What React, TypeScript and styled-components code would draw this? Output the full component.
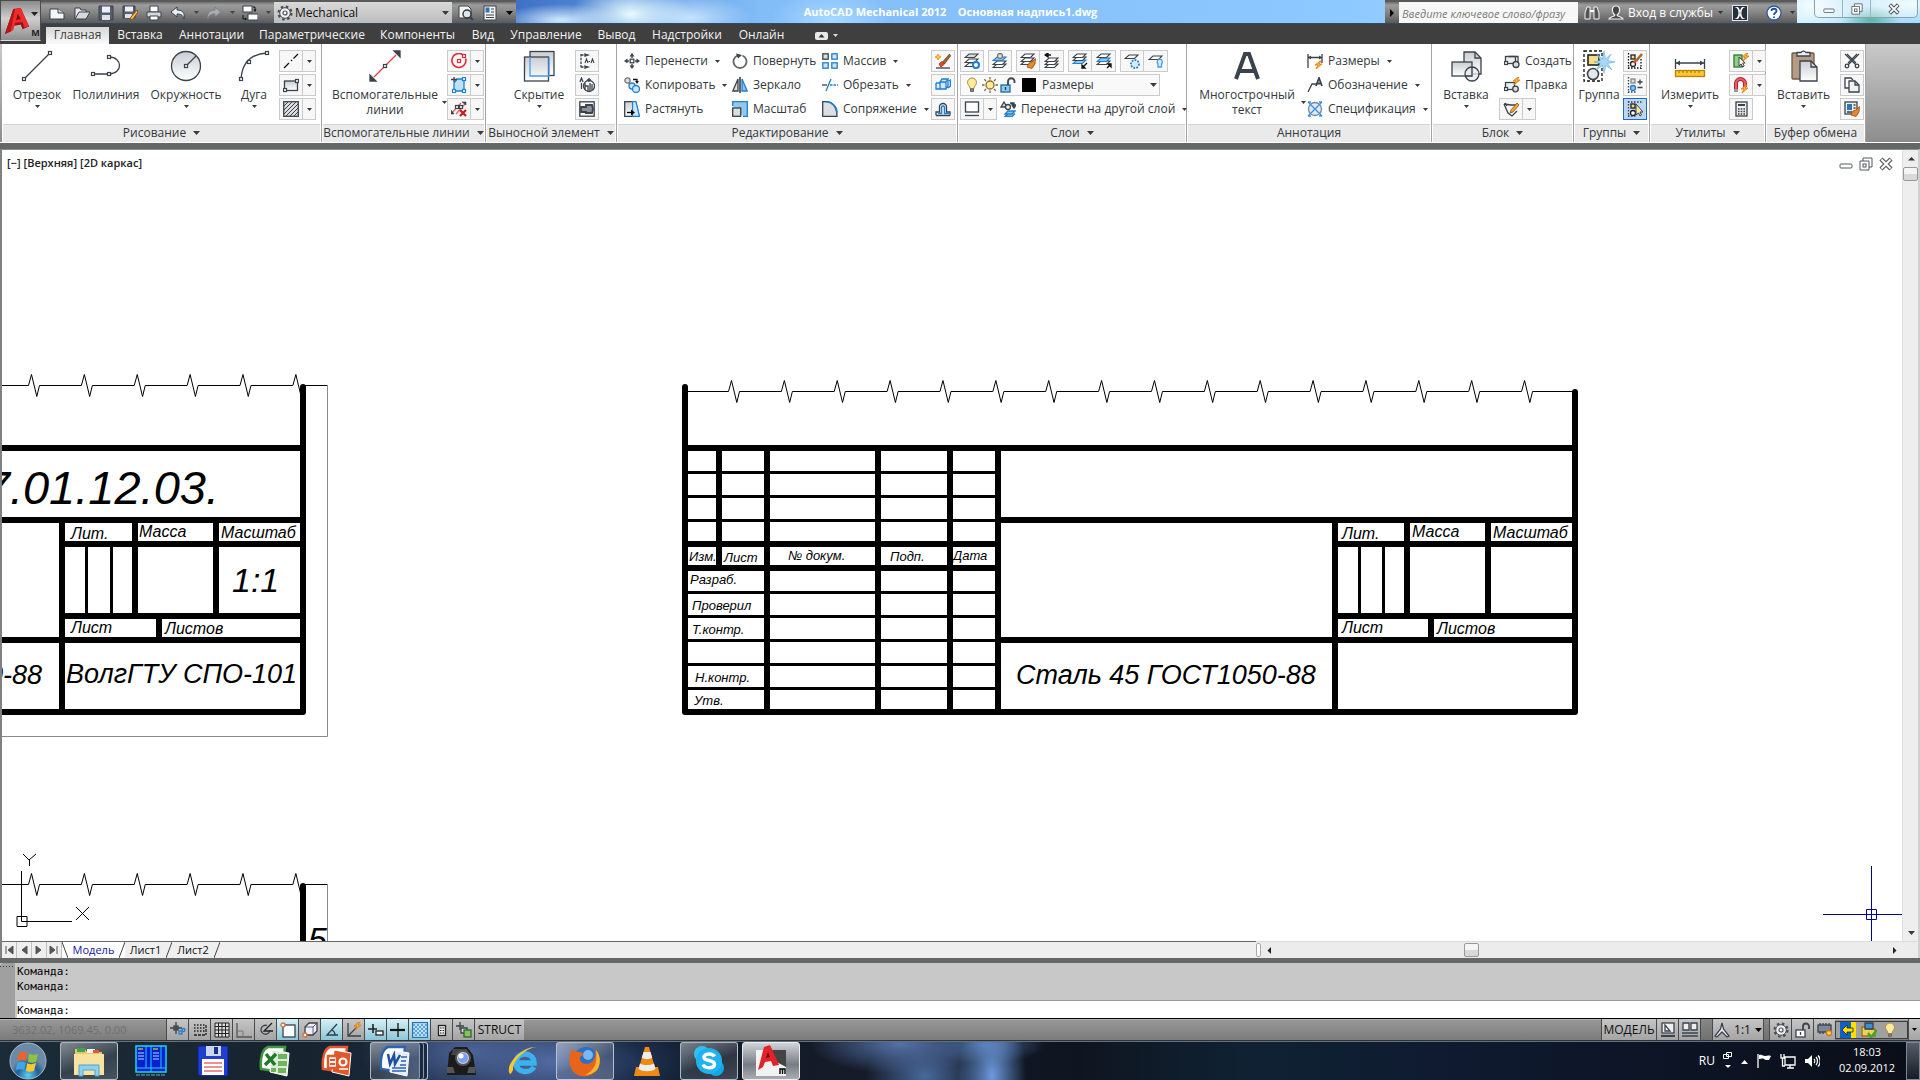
import React from "react";
import styled, { createGlobalStyle, css } from "styled-components";

const UI = `"Open Sans", "Noto Sans", sans-serif`;
const INK = "#3a424b";
const BLUE = "#1f7fd0";

const Global = createGlobalStyle`
  *, *::before, *::after { box-sizing: border-box; }
  html, body, #root { height: 100%; }
  body { margin: 0; overflow: hidden; background: #636363; font: 12px/16px ${UI}; color: #33383d; }
  button, input, select { font: inherit; color: inherit; margin: 0; padding: 0; border: 0; background: none; border-radius: 0; }
  svg { display: block; flex: none; }
`;

/* ---------- icons ---------- */

type IcoProps = { s?: number; vb?: string; w?: number; children: React.ReactNode };
const Ico = ({ s = 16, w = 1.3, vb, children }: IcoProps) => (
  <svg width={s} height={s} viewBox={vb || `0 0 ${s} ${s}`} fill="none" stroke={INK} strokeWidth={w} aria-hidden="true">
    {children}
  </svg>
);
const Node = ({ x, y, c = INK }: { x: number; y: number; c?: string }) => (
  <rect x={x - 1.5} y={y - 1.5} width="3" height="3" fill="#fff" stroke={c} strokeWidth="1.2" />
);
const Bolt = ({ x, y }: { x: number; y: number }) => (
  <path transform={`translate(${x} ${y})`} d="M5 0 0 4h3L1 8l6-5H4L6 0z" fill="#ffb52e" stroke="#d9760a" strokeWidth=".8" />
);
const Sheet = ({ y, f = "#fff", c = INK }: { y: number; f?: string; c?: string }) => (
  <path d={`M5 ${y}h9l-3.500 3.500H1z`} fill={f} stroke={c} strokeWidth="1.100" />
);
const Grey = () => (
  <defs>
    <linearGradient id="gm" x1="0" y1="0" x2="0" y2="1">
      <stop offset="0" stopColor="#c9cdd3" /><stop offset="1" stopColor="#fff" />
    </linearGradient>
  </defs>
);
const Arrow = ({ size = 5, color = "#3b3b3b" }: { size?: number; color?: string }) => (
  <svg width={size} height={Math.ceil(size / 2)} viewBox="0 0 6 3" preserveAspectRatio="none" aria-hidden="true">
    <path d="M0 0h6L3 3z" fill={color} />
  </svg>
);
const Bulb = ({ s = 16 }: { s?: number }) => (
  <Ico s={s} vb="0 0 16 16" w={1}>
    <path d="M8 1a4.500 4.500 0 0 0-4.500 4.500C3.500 8 6 9 6 11.500h4C10 9 12.500 8 12.500 5.500A4.500 4.500 0 0 0 8 1z" fill="#ffeb9c" stroke="#a98b45" />
    <path d="M6.500 12h3v2.500h-3z" fill="#888" stroke="#666" />
  </Ico>
);
const Gear = ({ s = 16, c = "#4a5058" }: { s?: number; c?: string }) => (
  <Ico s={s} vb="0 0 16 16" w={1.2}>
    <circle cx="8" cy="8" r="6.300" stroke={c} strokeWidth="2.600" strokeDasharray="2.500 2.450" />
    <circle cx="8" cy="8" r="5.300" fill="#eee" stroke={c} strokeWidth="1" />
    <circle cx="8" cy="8" r="2" fill="#fff" stroke={c} />
  </Ico>
);
const BrushShape = () => (
  <path d="M15.500 5.500 12 9l-3 1-2 4 5 1.500L15 11z" fill="#e8882a" stroke="#9c4b10" strokeWidth=".8" />
);

const I = {
  line: <Ico s={32}><path d="M3 29 29 3" /><Node x={3} y={29} /><Node x={29} y={3} /></Ico>,
  pline: <Ico s={32}><path d="M3 24h16c14 0 14-17 0-17" /><Node x={3} y={24} /><Node x={19} y={24} /><Node x={19} y={7} /></Ico>,
  circle: <Ico s={32}><Grey /><circle cx="16" cy="16" r="14.500" fill="url(#gm)" /><path d="M16 16 26 6" /><Node x={16} y={16} /></Ico>,
  arc: <Ico s={32}><path d="M3 29C4 14 12 4 29 3" /><Node x={3} y={29} /><Node x={11} y={12} /><Node x={29} y={3} /></Ico>,
  dash: <Ico><path d="M1 15 6 10M8 8l1-1M10.500 5.500 15 1" stroke="#111" /></Ico>,
  rect: <Ico><Grey /><rect x="1.500" y="4" width="13" height="9.500" fill="url(#gm)" /><Node x={2} y={13} /><Node x={14} y={4} /></Ico>,
  hatch: <Ico><rect x=".7" y=".7" width="14.600" height="14.600" fill="#ddd" /><path d="M1 5 5 1M1 9l8-8M1 13 13 1M3 15 15 3M7 15l8-8M11 15l4-4" strokeWidth="1" /></Ico>,
  xline: <Ico s={32}><path d="M5 27 27 5" stroke="#e04040" /><path d="M1 31v-6l6 6zM31 1v6l-6-6z" fill={INK} /><Node x={16} y={16} /></Ico>,
  cline: <Ico><path d="M11.500 1.500A7 7 0 1 0 14.600 5.500" stroke="#e02f3a" strokeWidth="1.600" /><Node x={8} y={8} c="#e02f3a" /><Node x={13} y={3} c="#e02f3a" /></Ico>,
  cshape: <Ico><path d="M3 14V6l3-4h7v12z" fill="#bfe0f7" stroke={BLUE} /><path d="M3 0v5M0 2.500h6" /><Node x={3} y={14} c={BLUE} /><Node x={13} y={14} c={BLUE} /><Node x={13} y={2} c={BLUE} /></Ico>,
  cdel: <Ico><path d="M1 12 10 2M5 13l9-10" stroke="#d66" /><path d="M0 13v-4l3 4zM11 1h4v3z" fill={INK} strokeWidth=".6" /><Node x={6} y={6} /><Node x={10} y={6} /><path d="m9 9 6 6m0-6-6 6" stroke="#d01818" strokeWidth="2.200" /></Ico>,
  hide: <Ico s={32}><Grey /><rect x="7" y="1.500" width="24" height="24" fill="url(#gm)" /><rect x="1.500" y="7" width="24" height="24" fill="url(#gm)" /><path d="M7 7v19h19V7" stroke="#4a9be8" /></Ico>,
  detailA: <Ico><path d="M2 1v14M2 2h5M2 14h5" strokeDasharray="2.500 1.200" /><path d="m6 1 3 1-3 1zM6 13l3 1-3 1z" fill={INK} /><path d="m6 10 1.500-4L9 10M9.500 8.500h1.500M12 10l1.500-4 1.500 4" strokeWidth="1.100" /></Ico>,
  detailB: <Ico><circle cx="10" cy="9" r="5.500" /><path d="M6 13V6m0 3h3v5m2 0V6m2 1v6" /><path d="m1 5 1.500-4L4 5M2.500 6v6M8 3l4 0M10 1v4" /></Ico>,
  detailC: <Ico><rect x=".8" y=".8" width="14.400" height="14.400" /><path d="M2 6h5V4h6l1 4-1 4H7v-1H2z" fill="#8b9198" strokeWidth="1.800" /></Ico>,
  move: <Ico><path d="M8 0 5.500 3.500h5zM8 16l-2.500-3.500h5zM0 8l3.500-2.500v5zM16 8l-3.500-2.500v5z" fill={INK} stroke="none" /><path d="M8 3v2M8 11v2M3 8h2M11 8h2" /><rect x="6.200" y="6.200" width="3.600" height="3.600" fill="#fff" /></Ico>,
  copy: <Ico><circle cx="3.500" cy="3.500" r="2.700" fill="#ddd" stroke="#777" /><circle cx="8" cy="9" r="3" fill="#cfe6fa" stroke={BLUE} /><circle cx="12" cy="12" r="3.500" fill="#cfe6fa" stroke={BLUE} /><path d="M9 2.500h4v2" stroke="#111" /><path d="M11 4h4l-2 3z" fill="#111" stroke="none" /></Ico>,
  stretch: <Ico><Grey /><path d="M8.500.7H12L15.500 15.300H8.500z" fill="#cfe6fa" stroke={BLUE} /><path d="M8 .7H.7v14.600H8" fill="url(#gm)" /><path d="M3 11.500h5" stroke="#000" /><path d="m7 8.500 4 3-4 3z" fill="#000" stroke="none" /></Ico>,
  rotate: <Ico><path d="M5.500 2.500A6.500 6.500 0 1 0 10.500 2.500" stroke="#666" strokeWidth="1.800" /><path d="M4 .5 10 2 6 5.500z" fill={INK} stroke="none" /></Ico>,
  mirror: <Ico><path d="M6 2v12H.8z" fill="#ddd" /><path d="M10 2v12h5.200z" fill="#8fc3ee" stroke={BLUE} /><path d="M8 0v16" stroke="#111" /></Ico>,
  scale: <Ico><path d="M.7 5V.7h14.600v14.600H11" fill="#8fc9ec" stroke={BLUE} /><rect x=".7" y="7" width="8" height="8.300" fill="#ddd" /></Ico>,
  array: <Ico><rect x=".8" y=".8" width="5.400" height="5.400" fill="#ddd" /><rect x="9.800" y=".8" width="5.400" height="5.400" fill="#cfe6fa" stroke={BLUE} /><rect x=".8" y="9.800" width="5.400" height="5.400" fill="#cfe6fa" stroke={BLUE} /><rect x="9.800" y="9.800" width="5.400" height="5.400" fill="#cfe6fa" stroke={BLUE} /></Ico>,
  trim: <Ico><path d="M0 8h5" /><path d="M4 14 9 2" stroke={BLUE} /><path d="M8 8h8" stroke={BLUE} strokeDasharray="2.500 1" /></Ico>,
  fillet: <Ico><path d="M.7 15.300V.7H4c6 0 11 5 11 14.600z" fill="#dcdfe3" /><path d="M4 .7c6 0 11 5 11 11" stroke={BLUE} strokeWidth="1.600" /></Ico>,
  match: <Ico><path d="M1 15h14" /><path d="m14.500 1-7 8 2 2 6-8z" fill="#a06a34" stroke="#6b4218" strokeWidth=".8" /><path d="M4 11 7 8.500 9.500 11 6 14z" fill="#e34a22" stroke="#9a2c0c" strokeWidth=".8" /><path d="m3 1 1 2 2 1-2 1-1 2-1-2-2-1 2-1z" fill="#ffc14d" stroke="#e28a0c" strokeWidth=".7" /></Ico>,
  block3d: <Ico><path d="M5 5h6v7H5zM5 5l2-3h6l-2 3M11 12l2-3V2M1 6h4M1 6v6h4M14 4l1.500-1v6L13 11" fill="#cfe6fa" stroke={BLUE} /></Ico>,
  offset: <Ico><path d="M1 14.500h14M1 14.500V11h3.500V6a3.500 3.500 0 0 1 7 0v5H15v3.500" /><path d="M3 12.500h3.500V6.500a1.500 1.500 0 0 1 3 0v6H14" stroke={BLUE} strokeWidth="1.500" /></Ico>,
  lay1: <Ico><Sheet y={10} /><Sheet y={6} /><Sheet y={1} f="#ddd" /><circle cx="12" cy="12" r="3" stroke={BLUE} strokeWidth="2" fill="#fff" /></Ico>,
  lay2: <Ico><Sheet y={11} /><Sheet y={8} /><Sheet y={4} f="#8fc9ec" c={BLUE} /><circle cx="8" cy="3" r="2.500" fill="#ddd" stroke="#777" /></Ico>,
  lay3: <Ico><Sheet y={8} /><Sheet y={5} /><Sheet y={1} /><BrushShape /></Ico>,
  lay4: <Ico><Sheet y={11} /><Sheet y={8} /><Sheet y={5} /><path d="M7 2H2M1 2l3-2v4z" fill="#111" stroke="#111" /></Ico>,
  lay5: <Ico><Sheet y={7} f="#8fc9ec" c={BLUE} /><Sheet y={4} /><Sheet y={1} /><path d="m15 10-4 4M10 15v-3l3 3z" fill="#111" stroke="#111" /></Ico>,
  lay6: <Ico><Sheet y={8} /><Sheet y={5} f="#8fc9ec" c={BLUE} /><Sheet y={1} /><path d="m11 15 3-3M15 11v3l-3-3z" fill="#111" stroke="#111" /></Ico>,
  lay7: <Ico><Sheet y={2} /><circle cx="11" cy="11" r="4" fill="#d9ecfb" stroke={BLUE} strokeDasharray="1.800 1.200" strokeWidth="1.800" /></Ico>,
  lay8: <Ico><Sheet y={3} /><path d="M12 6a3 3 0 0 0-2 5v3h3.500v-3A3 3 0 0 0 12 6z" fill="#d9ecfb" stroke="#4f9ede" /></Ico>,
  sun: <Ico><circle cx="8" cy="8" r="4" fill="#ffeb9c" stroke="#8b6f2c" /><path d="M8 0v2.500M8 13.500V16M0 8h2.500M13.500 8H16M2.300 2.300l1.800 1.800M12 12l1.700 1.700M13.700 2.300 12 4.100M4 12l-1.700 1.700" stroke="#7a6a45" /></Ico>,
  lock: <Ico><rect x="1" y="8" width="9" height="7" fill="#8fc9ec" stroke="#1a6a9a" /><path d="M8 8V4.500a3.200 3.200 0 0 1 6.500 0V6" strokeWidth="1.800" /><path d="M5.500 10v3" stroke="#103a55" /></Ico>,
  laystate: <Ico><rect x="1.500" y="1" width="13" height="10" fill="#fff" /><path d="M1 14.500h14" /></Ico>,
  layMove: <Ico><path d="m1 6 3-5 3 5z" fill="#ddd" /><circle cx="8" cy="6" r="2.500" fill="#eee" /><path d="M10 2h4v3M12 4h4l-2 3z" fill={INK} /><path d="M8 10h7l-3 3H5zM8 13l-3 2.500h7l3-3" fill="#8fc9ec" stroke={BLUE} /></Ico>,
  dim: <Ico><path d="M1 1v14M15 1v9M1 4.500h14" /><path d="m1 4.500 3-2v4zM15 4.500l-3-2v4z" fill={INK} stroke="none" /><Bolt x={8} y={8} /></Ico>,
  leader: <Ico><path d="M1 15 5 7h4" /><path d="m9 9 3-8 3 8M10 6.500h4" strokeWidth="1.800" /></Ico>,
  bom: <Ico><circle cx="8" cy="8" r="6.500" fill="#dbe9f8" stroke="#7a8896" /><path d="m1 1 14 14M15 1 1 15M1 1h3M12 1h3M1 15h3M12 15h3" stroke="#3f8fe0" /></Ico>,
  insert: <Ico s={32}><Grey /><path d="M14 2h11l6 6v16H14z" fill="url(#gm)" /><path d="M25 2v6h6" /><rect x="2" y="12" width="20" height="14" fill="url(#gm)" /><circle cx="22" cy="24" r="7" fill="#e8eaed" fillOpacity=".8" /><path d="M22 17v9h-7" /></Ico>,
  create: <Ico><rect x="1.500" y="3.500" width="10" height="7" fill="#eee" /><path d="M4 3.500h10v7" /><circle cx="12" cy="11.500" r="3" fill="#ddd" /><Node x={2} y={10} /></Ico>,
  edit: <Ico><rect x="1.500" y="5.500" width="9" height="7" fill="#eee" /><circle cx="11.500" cy="12" r="2.800" fill="#ddd" /><Node x={2} y={12} /><Bolt x={9} y={0} /></Ico>,
  attr: <Ico><path d="m1 3 7 1 7 0M1 3l4 9 4 3 5-5" /><path d="m2 2 2 3" /><path d="m14 2-6 7-1 3 3-1 6-7z" fill="#f3a536" stroke="#8a4f10" strokeWidth=".8" /></Ico>,
  group: <Ico s={32}><rect x="1" y="1" width="18" height="30" stroke="#111" strokeDasharray="3 2" /><rect x="5" y="5" width="11" height="10" fill="#f7dd88" stroke="#222" strokeWidth="1.600" /><circle cx="10" cy="24" r="5.500" fill="#dfe9ef" stroke="#444" strokeWidth="1.600" /><path d="M21 1l1.500 8L28 4l-3.500 6.500L32 12l-7.500 1.500L29 20l-6-4.500L21 23l-1.500-7.500L13 20l4.500-6.500L11 12l6.500-1.500L14 4l5.500 5z" fill="#a9d8f7" stroke="#5aa9e2" strokeWidth=".6" /></Ico>,
  gEdit: <Ico><path d="M1.500 0v16M14 6v10M1 15h13" strokeDasharray="1.500 1.500" stroke="#111" /><rect x="4" y="2" width="4" height="4" fill="#f7dd88" stroke="#222" /><circle cx="6" cy="11" r="2.500" stroke="#222" /><path d="m15 1-6 7" stroke="#a06a34" strokeWidth="2.600" /><path d="M9 7 7 10" stroke="#e34a22" strokeWidth="2.600" /></Ico>,
  gPlus: <Ico><path d="M1.500 0v16M1 15h9" strokeDasharray="1.500 1.500" /><rect x="4" y="2" width="4" height="4" fill="#ddd" stroke="#888" /><circle cx="6" cy="11" r="2.500" fill="#8fc9ec" stroke={BLUE} /><path d="M10.500 5h5M13 2.500v5M10.500 10.500h5" /></Ico>,
  gSel: <Ico><path d="M1.500 0v16M1 1h14M1 15h9" strokeDasharray="1.500 1.500" /><rect x="4" y="3" width="4" height="4" fill="#f7dd88" stroke="#222" /><circle cx="6" cy="12" r="2.500" stroke="#222" fill="#fff" /><path d="M9 3v11l2.500-2 1.500 3 1.500-1-1.500-3H16z" fill="#ffe9a8" strokeWidth="1" /></Ico>,
  measure: <Ico s={32}><path d="M1.500 9v10M30.500 9v10M2 13h28" /><path d="m2 13 4-2.500v5zM30 13l-4-2.500v5z" fill={INK} stroke="none" /><rect x="1.500" y="20.500" width="29" height="6" fill="#fcc832" stroke="#b98106" /><path d="M5 21v2M9 21v2M13 21v2M17 21v2M21 21v2M25 21v2" stroke="#b98106" /></Ico>,
  qsel: <Ico><rect x="1" y="2" width="8" height="12" fill="#8fd08a" stroke="#2d7c2c" /><path d="M6 4v9l2.200-2 1.500 3 1.500-1-1.500-3h2.500z" fill="#fff" strokeWidth="1" /><Bolt x={9} y={0} /></Ico>,
  magnet: <Ico><path d="M3 14V6.500a4.500 4.500 0 0 1 9 0V10" stroke="#b02030" strokeWidth="4" /><path d="M3 13V6.500a4.500 4.500 0 0 1 9 0V9" stroke="#ea5a62" strokeWidth="2" /><path d="M1 13.500h4" stroke="#999" strokeWidth="3" /><Bolt x={8} y={8} /></Ico>,
  calc: <Ico><rect x="3" y="1" width="11" height="14" fill="#eee" /><path d="M5 4h7" strokeWidth="2" /><path d="M5 8h7M5 10.500h7M5 13h7" strokeDasharray="1.600 1.100" strokeWidth="1.500" /></Ico>,
  paste: <Ico s={32}><Grey /><rect x="4" y="3" width="22" height="26" rx="1" fill="#b49c84" stroke="#6e5b48" /><path d="M9 5V2.500h4a3 3 0 0 1 5 0h4V6H9z" fill="#eee" /><path d="M12 11h11l6 6v14H12z" fill="url(#gm)" /><path d="M23 11v6h6" /></Ico>,
  cut: <Ico><path d="m1 1 11 11M15 1 4 12M3 1l9 9M13 1 4 10" strokeWidth="1.100" /><circle cx="3" cy="13" r="1.800" /><circle cx="13" cy="13" r="1.800" /></Ico>,
  copyClip: <Ico><path d="M5 11H1V1h6l2 2" fill="#fff" /><path d="M5 4h6l4 4v7H5z" fill="#f2f2f2" /><path d="M11 4v4h4" /></Ico>,
  pasteProp: <Ico><rect x="1" y="1" width="12" height="12" fill="#eee" /><rect x="3" y="3" width="5" height="6" fill="#2f75b5" stroke="none" /><path d="M9.500 4h2M9.500 7h2M3 11h5" /><BrushShape /></Ico>,
};

/* quick access toolbar icons, light on grey */
const Q = {
  file: <Ico w={1}><path d="M1 4h8l6 4v6H1z" fill="#f4f6f9" /><path d="M9 4v4h6" fill="#cfd4da" /></Ico>,
  open: <Ico w={1}><path d="M1 14V3h5l1 2h5v3" fill="#e6e8ea" /><path d="m1 14 4-7h11l-4 7z" fill="#d5d9de" /></Ico>,
  save: <Ico w={1}><path d="M1 1h14v14H1z" fill="#555f6b" /><rect x="4" y="1.500" width="8" height="6" fill="#eef" stroke="none" /><rect x="4" y="10" width="8" height="5" fill="#dfe3e8" stroke="none" /></Ico>,
  saveAs: <Ico w={1}><path d="M1 1h12v12H1z" fill="#555f6b" /><rect x="3" y="1.500" width="8" height="5" fill="#eef" stroke="none" /><rect x="3" y="9" width="7" height="4" fill="#dfe3e8" stroke="none" /><path d="m15 5-6 7-1 3 3-1 5-7z" fill="#ffc04a" stroke="#8a4f10" /></Ico>,
  print: <Ico w={1}><path d="M4 1h8v6H4z" fill="#fff" /><path d="M1 7h14v5H1z" fill="#d5d9de" /><path d="M4 11h8v4H4z" fill="#fff" /></Ico>,
  undo: <Ico w={1}><path d="M1 7 7 2v3c6 0 8 3 7 9-1-4-3-5-7-5v3z" fill="#e8eef4" /></Ico>,
  redo: <Ico w={1}><path d="M15 7 9 2v3C3 5 1 8 2 14c1-4 3-5 7-5v3z" fill="#a9adb1" stroke="#7b7f84" /></Ico>,
  wswitch: <Ico w={1}><rect x="1" y="1" width="9" height="6" fill="#fff" /><rect x="6" y="9" width="10" height="6" fill="#fff" /><path d="M1 10v4h3M13 6V2h-2" stroke="#111" /><path d="M3 12.500v3l2-1.500zM11.500 4.500h3L13 7z" fill="#111" stroke="none" /></Ico>,
  preview: <Ico w={1}><path d="M1 1h9l3 3v9H1z" fill="#f2f2f2" /><circle cx="9" cy="9" r="4" fill="#dbe7f0" stroke="#333" strokeWidth="1.400" /><path d="m12 12 3 3" strokeWidth="2" /></Ico>,
  props: <Ico w={1}><rect x="2" y="1" width="12" height="14" fill="#f2f2f2" /><rect x="3.500" y="2.500" width="4" height="5" fill="#2f75b5" stroke="none" /><path d="M9 4h3M9 7h3M4 10h8M4 12.500h8" /></Ico>,
  binoc: <Ico w={1}><path d="M1 14V8l2-6h3v12zM15 14V8l-2-6h-3v12z" fill="#555" stroke="#f0f0f0" /><path d="M6 6h4" stroke="#fff" strokeWidth="2" /></Ico>,
  user: <Ico w={1}><path d="M8 1C5 1 4 3 4.500 6S7 10 7 10c0 2-5 1-6 4h14c-1-3-6-2-6-4 0 0 2-1 2.500-4S11 1 8 1z" fill="#444" stroke="#f4f4f4" strokeWidth="1.200" /></Ico>,
  exch: <Ico w={1}><rect x=".5" y=".5" width="15" height="15" fill="#26303a" stroke="#dfe6ec" /><path d="M2 2c6 0 6 12 0 12l4 0c3-3 3-9 0-12zM14 2c-6 0-6 12 0 12l-4 0c-3-3-3-9 0-12z" fill="#fff" stroke="none" /></Ico>,
};

/* status bar icons */
const S = [
  <Ico><path d="M6 0v12M0 6h12" /><rect x="4" y="4" width="4" height="4" /><rect x="9" y="9" width="3" height="3" stroke={BLUE} /><circle cx="13.500" cy="8" r="1.500" stroke={BLUE} /></Ico>,
  <Ico><path d="M2 3h11M2 6h11M2 9h11" strokeDasharray="1.500 1.500" stroke="#222" /><path d="M2 13h12M14 3v10" stroke="#222" strokeDasharray="3 1" /></Ico>,
  <Ico><path d="M1 1h14v14H1zM1 4.500h14M1 8h14M1 11.500h14M4.500 1v14M8 1v14M11.500 1v14" stroke="#222" strokeWidth="1" fill="#ddd" /></Ico>,
  <Ico><path d="M1 1v14h15" stroke="#555" /><path d="M1 9h6v6" stroke="#777" strokeWidth="1" /></Ico>,
  <Ico><path d="M12 8a4.500 4.500 0 1 1-3-4.500" /><path d="M14 1 6 9h9" stroke="#222" /></Ico>,
  <Ico><rect x="3" y="3" width="12" height="12" fill="#fdfdfd" /><circle cx="3" cy="3" r="2" fill="#fff" stroke="#e06b2d" /></Ico>,
  <Ico><path d="M3 5 7 1h8v8l-4 4H3z" fill="#eef" /><path d="M3 5h8v8M11 5l4-4" strokeWidth=".8" /><circle cx="3" cy="13" r="2" fill="#fff" stroke="#e06b2d" /></Ico>,
  <Ico><path d="M13 2 3 13h11M8 8c2 1 3 3 3 5" stroke="#26434c" /></Ico>,
  <Ico><path d="M2 1v13h13M2 14 12 4" /><Bolt x={8} y={0} /></Ico>,
  <Ico><path d="M5 2v9M0 7h9" stroke="#222" strokeWidth="1.600" /><rect x="8" y="9" width="7" height="4" fill="#fff" stroke="#222" /></Ico>,
  <Ico><path d="M8 1v14" stroke="#111" /><path d="M0 8h15" stroke="#111" strokeWidth="2.200" /></Ico>,
  <Ico><rect x=".5" y=".5" width="15" height="15" fill="#bfe0f7" stroke="#2a6fb0" /><path d="M1 3h14M1 7h14M1 11h14" stroke="#5fa5dd" strokeWidth="2" strokeDasharray="2 2" /><path d="M3 5h12M3 9h12M3 13h12" stroke="#5fa5dd" strokeWidth="2" strokeDasharray="2 2" /></Ico>,
  <Ico><rect x="4.500" y="3.500" width="7" height="10" fill="#eee" stroke="#222" /><path d="M6 6h4M6 8.500h4M6 11h4" stroke="#222" strokeWidth="1.200" strokeDasharray="1.500 1" /></Ico>,
  <Ico><path d="M4 0v8M0 4h8" /><path d="M5 6h6v5H5z" fill="#ddd" /><rect x="8" y="8" width="7" height="7" fill="#86c06a" stroke="#2b6b1c" /></Ico>,
];

/* ---------- title bar ---------- */

const Page = styled.div`
  display: flex; flex-direction: column; height: 100vh; overflow: hidden;
`;
const Top = styled.header`
  display: flex; flex: none; height: 44px; background: #3f3f3f;
`;
const AppButton = styled.button`
  display: grid; grid-template: 1fr 14px / 27px 1fr; align-items: center; width: 41px; height: 41px; flex: none; padding-left: 3px;
  background: linear-gradient(#8b8b8b, #cfcfcf 45%, #8e8e8e); border: 1px solid #4b4b4b; border-bottom-color: #ddd;
  > svg:first-child { grid-row: 1 / 3; }
  > b { font: 700 9px/12px ${UI}; color: #222; }
`;
const TopRows = styled.div`
  display: flex; flex-direction: column; flex: 1; min-width: 0;
`;
const TitleRow = styled.div`
  display: flex; height: 24px; flex: none; border-bottom: 1px solid #2d4a66;
  background:
    radial-gradient(60px 30px at 590px 14px, #e8fbff, transparent),
    radial-gradient(60px 16px at 520px 20px, #cfe9ff, transparent),
    radial-gradient(60px 24px at 650px 18px, #c4e4ff, transparent),
    radial-gradient(60px 30px at 790px 20px, #a9d8ff, transparent),
    radial-gradient(50px 30px at 1770px 6px, #f2fdff, transparent),
    radial-gradient(30px 14px at 1830px 20px, #5fb4a6, transparent),
    radial-gradient(70px 20px at 1870px 4px, #e9fbff, transparent),
    linear-gradient(90deg, #3e70c4 470px, #5b93dd 600px, #83bdf8 720px, #8dc8ff 1300px, #bfe8fb 1760px, #9fd6f7);
`;
const greyBar = css`
  background: linear-gradient(#6e6e6e, #9c9c9c 3px, #858585 50%, #5a5a5a);
  border-top: 2px solid #5a5a5a;
`;
const Quick = styled.div`
  display: flex; align-items: center; width: 475px; flex: none; padding-left: 4px; ${greyBar}
`;
const QButton = styled.button<{ $w?: number }>`
  display: flex; align-items: center; justify-content: center; width: ${p => p.$w || 24}px; height: 22px; flex: none;
`;
const Workspace = styled.div`
  display: flex; align-items: center; width: 179px; height: 21px; gap: 2px; padding: 0 3px; margin-right: 2px;
  background: linear-gradient(#d9d9d9, #bdbdbd); color: #000;
  select { appearance: none; flex: 1; height: 20px; outline: 0; color: #111; }
`;
const Caption = styled.h1`
  flex: 1; margin: 0; text-align: center; font: 700 11px/20px ${UI}; padding-top: 2px; color: #fff; white-space: pre;
`;
const SearchToggle = styled.button`
  width: 14px; flex: none; display: flex; align-items: center; justify-content: center; ${greyBar}
`;
const Search = styled.input`
  width: 179px; flex: none; background: #f7f7f7; border-top: 2px solid #5a5a5a; font: italic 11px/20px ${UI}; padding: 2px 3px 0; outline: 0;
  &::placeholder { color: #7a7a7a; opacity: 1; }
`;
const Info = styled.div`
  display: flex; align-items: center; width: 219px; flex: none; padding-left: 2px; color: #fff; ${greyBar}
`;
const SignIn = styled.button`
  display: flex; align-items: center; justify-content: space-between; width: 95px; flex: none; margin-right: 8px; white-space: nowrap;
`;
const Divider = styled.i`
  width: 1px; height: 16px; background: #aaa; margin: 0 8px;
`;
const WinControls = styled.div`
  display: flex; width: 104px; height: 18px; flex: none; margin: 0 2px 0 17px; border: 1px solid #8aa0b0; border-top: 0;
  border-radius: 0 0 5px 5px; background: rgba(255, 255, 255, .35);
  button { display: flex; align-items: center; justify-content: center; flex: 28; border-right: 1px solid #9db4c0; }
  button:last-child { flex: 47; border-right: 0; }
`;
const Tabs = styled.nav`
  display: flex; align-items: flex-end; height: 20px; padding-left: 5px;
`;
const Tab = styled.button<{ $w: number; $on?: boolean }>`
  width: ${p => p.$w}px; height: 17px; line-height: 15px; padding-bottom: 2px; flex: none; color: #f2f2f2; white-space: nowrap;
  ${p => p.$on && css`background: linear-gradient(#d6d6d6, #fafafa); color: #3c3c3c;`}
`;
const TabFold = styled.button`
  display: flex; align-items: center; gap: 5px; height: 17px; margin-left: 22px;
`;

const WinIcons = ({ s = 14 }: { s?: number }) => (
  <>
    <button aria-label="Свернуть"><Ico s={s} vb="0 0 14 14" w={1}><rect x="1" y="7" width="12" height="4" rx="1" fill="#fff" stroke="#555b61" /></Ico></button>
    <button aria-label="Развернуть"><Ico s={s} vb="0 0 14 14" w={1}><path d="M4 1h9v9H4z" fill="#fff" stroke="#555b61" /><path d="M1 4h9v9H1z" fill="#fff" stroke="#555b61" /><rect x="4" y="7" width="3" height="3" stroke="#555b61" /></Ico></button>
    <button aria-label="Закрыть"><Ico s={s} vb="0 0 14 14" w={1}><path d="m2 2 10 10M12 2 2 12" stroke="#555b61" strokeWidth="4.500" /><path d="m2.500 2.500 9 9M11.500 2.500l-9 9" stroke="#fff" strokeWidth="2" /></Ico></button>
  </>
);

const LogoA = ({ s }: { s: number }) => (
  <svg width={s} height={s} viewBox="0 0 28 28" aria-hidden="true">
    <path d="M10 1 18 0l9 20-7 3-2-5-7 1-3 6-7 3z" fill="#9c1212" />
    <path d="M10 1 18 0l9 20-5 1-2-6-8 1-2 8-3 1z" fill="#ee2c2c" />
    <path d="m15 6 3 6-5 1z" fill="#7d0a0a" />
    <path d="M10 1 12 1 7 25 1 28z" fill="#b81616" />
  </svg>
);

const TABS: [string, number][] = [
  ["Главная", 63], ["Вставка", 62], ["Аннотации", 81], ["Параметрические", 120], ["Компоненты", 91],
  ["Вид", 40], ["Управление", 86], ["Вывод", 55], ["Надстройки", 86], ["Онлайн", 63],
];

const Header = () => (
  <Top>
    <AppButton aria-label="Меню приложения">
      <LogoA s={26} /><Arrow size={7} color="#222" /><b>M</b>
    </AppButton>
    <TopRows>
      <TitleRow>
        <Quick>
          <QButton aria-label="Создать">{Q.file}</QButton>
          <QButton $w={25} aria-label="Открыть">{Q.open}</QButton>
          <QButton aria-label="Сохранить">{Q.save}</QButton>
          <QButton aria-label="Сохранить как">{Q.saveAs}</QButton>
          <QButton aria-label="Печать">{Q.print}</QButton>
          <QButton aria-label="Отменить">{Q.undo}</QButton>
          <QButton $w={12} aria-label="Список отмены"><Arrow color="#444" /></QButton>
          <QButton aria-label="Повторить">{Q.redo}</QButton>
          <QButton $w={12} aria-label="Список повтора"><Arrow color="#444" /></QButton>
          <QButton aria-label="Окна">{Q.wswitch}</QButton>
          <QButton $w={12} aria-label="Список окон"><Arrow color="#444" /></QButton>
          <Workspace>
            <Gear />
            <select aria-label="Рабочее пространство"><option>Mechanical</option></select>
            <Arrow size={7} />
          </Workspace>
          <QButton aria-label="Просмотр">{Q.preview}</QButton>
          <QButton aria-label="Свойства">{Q.props}</QButton>
          <QButton $w={14} aria-label="Настройка панели"><Arrow size={7} color="#000" /></QButton>
        </Quick>
        <Caption>{"AutoCAD Mechanical 2012    Основная надпись1.dwg"}</Caption>
        <SearchToggle aria-label="Свернуть поиск"><Ico s={8}><path d="m2 0 4 4-4 4z" fill="#000" stroke="none" /></Ico></SearchToggle>
        <Search aria-label="Поиск" placeholder="Введите ключевое слово/фразу" />
        <Info>
          <QButton aria-label="Поиск">{Q.binoc}</QButton>
          <QButton aria-label="Пользователь">{Q.user}</QButton>
          <SignIn>Вход в службы<Arrow color="#333" /></SignIn>
          <QButton $w={18} aria-label="Exchange">{Q.exch}</QButton>
          <Divider />
          <QButton $w={18} aria-label="Справка">
            <Ico><circle cx="8" cy="8" r="7" fill="#fff" stroke="#2c5aa0" /><path d="M5.500 6c0-3 5-3 5 0 0 2-2.500 1.500-2.500 4M8 11.500v1.500" stroke="#1c4fa8" strokeWidth="1.800" /></Ico>
          </QButton>
          <QButton $w={18} aria-label="Список справки"><Arrow color="#333" /></QButton>
        </Info>
        <WinControls><WinIcons s={12} /></WinControls>
      </TitleRow>
      <Tabs>
        {TABS.map(([t, w], i) => <Tab key={t} $w={w} $on={i === 0}>{t}</Tab>)}
        <TabFold aria-label="Свернуть ленту">
          <svg width="13" height="8" viewBox="0 0 13 8" aria-hidden="true"><rect width="13" height="8" rx="2" fill="#e8e8e8" /><path d="m6.500 2 3 3.500h-6z" fill="#333" /></svg>
          <Arrow color="#ddd" />
        </TabFold>
      </Tabs>
    </TopRows>
  </Top>
);

/* ---------- ribbon ---------- */

const Ribbon = styled.section`
  display: flex; flex: none; height: 99px; padding-left: 2px; border-bottom: 1px solid #fff;
  background: linear-gradient(#c9c9c9, #8d8d8d);
`;
const PanelBox = styled.div<{ $w: number }>`
  display: flex; flex-direction: column; width: ${p => p.$w}px; flex: none; background: #fff; border-right: 1px solid #a4a4a4;
`;
const PanelBody = styled.div<{ $pad: number }>`
  display: flex; align-items: flex-start; height: 80px; padding: 6px 0 0 ${p => p.$pad}px;
`;
const PanelTitle = styled.button`
  display: flex; align-items: center; justify-content: center; gap: 7px; height: 18px; margin: 0 1px; padding-bottom: 2px;
  background: #eaeaea; border-top: 1px solid #d4d4d4; white-space: nowrap;
`;
const Big = styled.button<{ $w: number }>`
  display: flex; flex-direction: column; align-items: center; width: ${p => p.$w}px; flex: none; line-height: 15px; white-space: nowrap;
  svg + span { margin-top: 5px; }
  span + span { margin-top: 3px; }
`;
const BigLabel = styled.span`
  display: grid; grid-template-columns: 1fr auto 1fr; align-items: center; width: 100%;
  b { grid-column: 2; font-weight: 400; white-space: pre; }
  svg { justify-self: end; }
`;
const Stack = styled.div<{ $w?: number; $ml?: number }>`
  display: flex; flex-direction: column; align-items: flex-start; gap: 2px; flex: none;
  margin-left: ${p => p.$ml || 0}px; ${p => p.$w && css`width: ${p.$w}px;`}
`;
const Row = styled.div<{ $gap?: number }>`
  display: flex; gap: ${p => p.$gap || 0}px; height: 22px;
`;
const Sq = styled.button<{ $on?: boolean }>`
  display: flex; align-items: center; justify-content: center; width: 24px; height: 22px; flex: none;
  border: 1px solid ${p => (p.$on ? "#1c6ac4" : "#cbcbcb")}; background: ${p => (p.$on ? "#bcd6f3" : "#f7f7f7")};
`;
const Drop = styled(Sq)`
  width: 13px; border-left: 0;
`;
const Joined = styled.div`
  display: flex;
  button + button { border-left: 0; }
`;
const Tool = styled.button`
  display: flex; align-items: center; height: 22px; gap: 5px; padding-left: 1px; white-space: nowrap;
  svg:nth-of-type(2) { margin-left: 2px; }
`;
const LayerCombo = styled.div`
  display: flex; align-items: center; gap: 2px; width: 200px; height: 22px; padding: 0 2px 0 3px; border: 1px solid #cbcbcb; background: #f9f9f9;
  select { appearance: none; flex: 1; outline: 0; padding-left: 4px; height: 20px; }
`;
const Swatch = styled.i`
  width: 14px; height: 14px; margin-left: 4px; background: #000;
`;

const Panel = ({ title, w, pad = 1, fold = true, children }: { title: string; w: number; pad?: number; fold?: boolean; children: React.ReactNode }) => (
  <PanelBox $w={w}>
    <PanelBody $pad={pad}>{children}</PanelBody>
    <PanelTitle>{title}{fold && <Arrow size={7} />}</PanelTitle>
  </PanelBox>
);
const BigTool = ({ icon, label, w, side, arrow = true }: { icon: React.ReactNode; label: string; w: number; side?: boolean; arrow?: boolean }) => (
  <Big $w={w}>
    {icon}
    <BigLabel><b>{label}</b>{side && <Arrow />}</BigLabel>
    {arrow && !side && <span><Arrow /></span>}
  </Big>
);
const Split = ({ icon, name }: { icon: React.ReactNode; name: string }) => (
  <Row><Sq aria-label={name}>{icon}</Sq><Drop aria-label={`${name}: список`}><Arrow /></Drop></Row>
);
const SmallTool = ({ icon, label, drop }: { icon: React.ReactNode; label: string; drop?: boolean }) => (
  <Tool>{icon}{label}{drop && <Arrow />}</Tool>
);

const RibbonBar = () => (
  <Ribbon>
    <Panel title="Рисование" w={320}>
      <BigTool icon={I.line} label="Отрезок" w={68} />
      <BigTool icon={I.pline} label="Полилиния" w={70} arrow={false} />
      <BigTool icon={I.circle} label="Окружность" w={90} />
      <BigTool icon={I.arc} label="Дуга" w={46} />
      <Stack $ml={2}>
        <Split icon={I.dash} name="Осевая" /><Split icon={I.rect} name="Прямоугольник" /><Split icon={I.hatch} name="Штриховка" />
      </Stack>
    </Panel>
    <Panel title="Вспомогательные линии" w={164}>
      <BigTool icon={I.xline} label={"Вспомогательные\nлинии"} w={124} side />
      <Stack><Split icon={I.cline} name="Окружность построения" /><Split icon={I.cshape} name="Контур" /><Split icon={I.cdel} name="Удалить" /></Stack>
    </Panel>
    <Panel title="Выносной элемент" w={131} pad={18}>
      <BigTool icon={I.hide} label="Скрытие" w={70} />
      <Stack $ml={1}><Sq aria-label="Вид">{I.detailA}</Sq><Sq aria-label="Разрез">{I.detailB}</Sq><Sq aria-label="Деталь">{I.detailC}</Sq></Stack>
    </Panel>
    <Panel title="Редактирование" w={341} pad={6}>
      <Stack $w={108}><SmallTool icon={I.move} label="Перенести" drop /><SmallTool icon={I.copy} label="Копировать" drop /><SmallTool icon={I.stretch} label="Растянуть" /></Stack>
      <Stack $w={90}><SmallTool icon={I.rotate} label="Повернуть" /><SmallTool icon={I.mirror} label="Зеркало" /><SmallTool icon={I.scale} label="Масштаб" /></Stack>
      <Stack $w={110}><SmallTool icon={I.array} label="Массив" drop /><SmallTool icon={I.trim} label="Обрезать" drop /><SmallTool icon={I.fillet} label="Сопряжение" drop /></Stack>
      <Stack><Sq aria-label="Стереть">{I.match}</Sq><Sq aria-label="Расчленить">{I.block3d}</Sq><Sq aria-label="Подобие">{I.offset}</Sq></Stack>
    </Panel>
    <Panel title="Слои" w={229} pad={2}>
      <Stack>
        <Row $gap={4}>
          <Sq aria-label="Свойства слоя">{I.lay1}</Sq>
          <Sq aria-label="Текущий слой">{I.lay2}</Sq>
          <Joined><Sq aria-label="Соответствие">{I.lay3}</Sq><Sq aria-label="Предыдущий">{I.lay4}</Sq></Joined>
          <Joined><Sq aria-label="Отключить">{I.lay5}</Sq><Sq aria-label="Включить">{I.lay6}</Sq></Joined>
          <Joined><Sq aria-label="Заморозить">{I.lay7}</Sq><Sq aria-label="Разморозить">{I.lay8}</Sq></Joined>
        </Row>
        <LayerCombo>
          <Bulb />{I.sun}{I.lock}<Swatch />
          <select aria-label="Слой"><option>Размеры</option></select>
          <Arrow size={7} />
        </LayerCombo>
        <Row $gap={2}>
          <Split icon={I.laystate} name="Состояние слоя" />
          <SmallTool icon={I.layMove} label="Перенести на другой слой" drop />
        </Row>
      </Stack>
    </Panel>
    <Panel title="Аннотация" w={245} fold={false}>
      <BigTool
        icon={<Ico s={32}><path d="M5 29 14 4h4l9 25M8 21h16" strokeWidth="4" /></Ico>}
        label={"Многострочный\nтекст"} w={118} side
      />
      <Stack><SmallTool icon={I.dim} label="Размеры" drop /><SmallTool icon={I.leader} label="Обозначение" drop /><SmallTool icon={I.bom} label="Спецификация" drop /></Stack>
    </Panel>
    <Panel title="Блок" w={142}>
      <BigTool icon={I.insert} label="Вставка" w={66} />
      <Stack>
        <Row $gap={4}><i /><SmallTool icon={I.create} label="Создать" /></Row>
        <Row $gap={4}><i /><SmallTool icon={I.edit} label="Правка" /></Row>
        <Split icon={I.attr} name="Атрибуты" />
      </Stack>
    </Panel>
    <Panel title="Группы" w={76}>
      <BigTool icon={I.group} label="Группа" w={48} arrow={false} />
      <Stack><Sq aria-label="Изменить группу">{I.gEdit}</Sq><Sq aria-label="Состав группы">{I.gPlus}</Sq><Sq $on aria-label="Выбор группы">{I.gSel}</Sq></Stack>
    </Panel>
    <Panel title="Утилиты" w={116}>
      <BigTool icon={I.measure} label="Измерить" w={78} />
      <Stack><Split icon={I.qsel} name="Выбор" /><Split icon={I.magnet} name="Привязка" /><Sq aria-label="Калькулятор">{I.calc}</Sq></Stack>
    </Panel>
    <Panel title="Буфер обмена" w={100} fold={false}>
      <BigTool icon={I.paste} label="Вставить" w={73} />
      <Stack><Sq aria-label="Вырезать">{I.cut}</Sq><Sq aria-label="Копировать">{I.copyClip}</Sq><Sq aria-label="Свойства">{I.pasteProp}</Sq></Stack>
    </Panel>
  </Ribbon>
);

/* ---------- drawing area ---------- */

const FrameStrip = styled.div<{ $h: number }>`
  height: ${p => p.$h}px; flex: none; background: #656866;
`;
const Workarea = styled.main`
  display: flex; flex: 1; min-height: 0; background: #fff; border-left: 2px solid #808080; border-top: 1px solid #8c8c8c; border-right: 2px solid #d0d0d0;
`;
const Canvas = styled.div`
  position: relative; flex: 1; min-width: 0; overflow: hidden;
`;
const ViewLabel = styled.div`
  position: absolute; left: 5px; top: 5px; display: flex; gap: 3px; font: 600 11px/16px ${UI}; color: #222;
`;
const ViewControls = styled.div`
  position: absolute; right: 9px; top: 7px; display: flex; gap: 6px;
`;
const VScroll = styled.div`
  display: flex; flex-direction: column; width: 16px; flex: none; background: #eee; border-left: 1px solid #e2e2e2;
`;
const ScrollBtn = styled.button`
  display: flex; align-items: center; justify-content: center; width: 16px; height: 17px; flex: none;
`;
const Thumb = styled.i`
  width: 15px; height: 14px; flex: none; border: 1px solid #999; border-radius: 2px; background: linear-gradient(#f5f5f5 50%, #d9d9d9 50%);
`;
const Fill = styled.i`
  flex: 1;
`;
const DrawText = styled.text`
  font-family: "Liberation Sans", Arial, sans-serif; font-style: italic; fill: #000;
`;

const TEXTS: [string, number, number, number, ("start" | "end")?][] = [
  ["7.01.12.03.", 219, 504, 47, "end"], ["Лит.", 71, 539, 16], ["Масса", 139, 537, 16], ["Масштаб", 221, 538, 16],
  ["1:1", 232, 592, 34], ["Лист", 71, 633, 16], ["Листов", 165, 634, 16], ["ВолгГТУ СПО-101", 66, 683, 27], ["0-88", 42, 684, 27, "end"],
  ["Изм.", 689, 561, 13], ["Лист", 724, 562, 13], ["№ докум.", 788, 560, 13], ["Подп.", 890, 561, 13], ["Дата", 953, 560, 13],
  ["Разраб.", 690, 584, 13], ["Проверил", 692, 610, 13], ["Т.контр.", 692, 634, 13], ["Н.контр.", 695, 682, 13], ["Утв.", 694, 705, 13],
  ["Лит.", 1342, 539, 16], ["Масса", 1412, 537, 16], ["Масштаб", 1493, 538, 16], ["Лист", 1342, 633, 16], ["Листов", 1437, 634, 16],
  ["Сталь 45 ГОСТ1050-88", 1016, 684, 27], ["5", 308, 951, 34],
];
const zigzag = (x0: number, first: number, n: number, y: number, end: number) => {
  let d = `M${x0} ${y}`;
  for (let i = 0; i < n; i++) {
    const p = first + i * 52.87;
    d += `H${p - 3}l3-11 5.300 22 2.700-11`;
  }
  return d + `H${end}`;
};
const THICK = [
  "M2 448H303M2 520H303M62 544H303M62 616H303M2 640H303M2 712H303M62 520V712M135 520V616M216 520V616M159 616V640",
  "M685 448H1575M685 544H998M685 568H998M685 712H1575M719 448V568M767 448V712M878 448V712M950 448V712M998 448V712",
  "M998 520H1575M998 640H1575M1335 520V712M1335 544H1575M1335 616H1575M1407 520V616M1488 520V616M1431 616V640",
].join("");
const THIN = [
  "M86.500 544V616M111.500 544V616M1359.500 544V616M1383.500 544V616",
  ...[472.5, 496.5, 520.5, 592.5, 616.5, 640.5, 664.5, 688.5].map(y => `M685 ${y}H998`),
].join("");

const Drawing = () => (
  <svg width="100%" height="100%" role="img" aria-label="Чертёж основной надписи">
    <g transform="translate(-2 -150)" fill="none" stroke="#000">
      <path d="M2 736.500H327.500V385M327.500 884V960" stroke="#8a8a8a" />
      <path d={zigzag(2, 31.5, 6, 385.5, 327)} />
      <path d={zigzag(2, 31.5, 6, 884.5, 327)} />
      <path d={zigzag(688, 731.5, 16, 391.5, 1573)} />
      <path d={THICK} strokeWidth="6" />
      <path d="M303 387V712M303 886V960M685 387V712M1575 392V712" strokeWidth="6" strokeLinecap="round" />
      <path d={THIN} strokeWidth="3" />
      {TEXTS.map(([t, x, y, s, a], i) => (
        <DrawText key={i} x={x} y={y} fontSize={s} textAnchor={a || "start"} stroke="none">{t}</DrawText>
      ))}
      <path d="M21.500 871V921.500H72M17 916.500h10v10H17zM23 854l6 6 7-6M29.500 860v6M76 907l13 13M89 907l-13 13" />
      <path d="M1871.500 866V941M1823 914.500H1902M1866.500 909.500h10v10h-10z" stroke="#00009a" />
    </g>
  </svg>
);

const LayoutBar = styled.div`
  display: flex; height: 17px; flex: none; background: #efefef; border-left: 2px solid #808080; border-right: 2px solid #d0d0d0;
`;
const LayoutTabs = styled.div`
  display: flex; flex: 1; border-top: 1px solid #656866;
`;
const NavBtn = styled.button`
  width: 15px; display: flex; align-items: center; justify-content: center; border-right: 1px solid #c0c0c0;
`;
const SheetTab = styled.button<{ $on?: boolean; $w: number }>`
  display: flex; align-items: center; justify-content: space-between; width: ${p => p.$w}px; font: 11px/16px ${UI};
  color: ${p => (p.$on ? "#1414a0" : "#111")}; ${p => p.$on && css`background: #fff;`}
`;
const HScroll = styled.div`
  display: flex; align-items: center; width: 662px; flex: none; padding-right: 16px; background: #ececec; border-top: 1px solid #dcdcdc;
`;
const Grip = styled.i`
  width: 5px; height: 14px; border: 1px solid #aaa; border-radius: 2px; background: #fff;
`;
const HTrack = styled.div`
  display: grid; grid-template-columns: 187fr 15px 407fr; flex: 1;
`;
const SlashTall = styled.svg`
  height: 16px; width: 6px;
`;
const Edge = ({ back }: { back?: boolean }) => (
  <SlashTall viewBox="0 0 6 16" fill="none" stroke="#444" aria-hidden="true"><path d={back ? "M0 0 6 16" : "M0 16 6 0"} /></SlashTall>
);

const Command = styled.section`
  display: flex; height: 55px; flex: none; background: #c8c8c8; font: 11px/15px "DejaVu Sans Mono", monospace; color: #000;
`;
const CommandGrip = styled.div`
  width: 15px; margin-right: 2px; background: radial-gradient(circle, #333 1px, transparent 1px) 2px 2px / 3px 3px repeat-x, #a0a0a0; border-radius: 4px 0 0 0;
`;
const CommandMain = styled.div`
  flex: 1; display: flex; flex-direction: column;
`;
const History = styled.div`
  flex: 1; padding-top: 1px; border-bottom: 1px solid #999;
  p { margin: 0; }
`;
const Prompt = styled.label`
  display: flex; align-items: flex-end; height: 17px; background: #fff;
  input { flex: 1; outline: 0; height: 15px; }
`;

const Status = styled.footer`
  display: flex; height: 23px; flex: none; border-top: 1px solid #000; border-bottom: 1px solid #333; background: linear-gradient(#989898, #7b7b7b);
  color: #111; box-shadow: inset 0 1px #b5b5b5;
`;
const Coords = styled.output`
  width: 166px; padding-left: 12px; font: 11px/22px ${UI}; color: #6f6f6f; flex: none;
`;
const StBtn = styled.button<{ $on?: boolean; $w?: number }>`
  display: flex; align-items: center; justify-content: center; gap: 4px; width: ${p => p.$w || 22}px; flex: none;
  border-left: 1px solid #4a4a4a; background: ${p => (p.$on ? "linear-gradient(#d5f0f7, #8cc6d6)" : "linear-gradient(#c6c6c6, #a4a4a4)")};
`;
const Gap = styled.i<{ $w: number }>`
  width: ${p => p.$w}px; background: linear-gradient(#888, #707070); border-left: 1px solid #4a4a4a;
`;
const Tray = styled.div`
  display: flex; align-items: center; gap: 5px; width: 73px; padding: 0 4px; margin: 2px 0 1px; border: 1px solid #3c3c3c; background: #a0a0a0;
`;

/* ---------- taskbar ---------- */

const Taskbar = styled.footer`
  display: flex; height: 39px; flex: none; border-top: 1px solid #5f7186; color: #fff;
  background:
    radial-gradient(34px 70px at 992px 34px, #6c9ade, transparent),
    radial-gradient(60px 20px at 985px 2px, #4a6a9c, transparent),
    radial-gradient(90px 30px at 900px 2px, #5472a8, transparent),
    radial-gradient(60px 40px at 925px 34px, #48699c, transparent),
    radial-gradient(110px 50px at 470px 10px, #4c6498, transparent),
    radial-gradient(90px 50px at 550px 20px, #526ca4, transparent),
    radial-gradient(60px 40px at 640px 20px, #1f3354, transparent),
    linear-gradient(90deg, #1b2b38, #17242f 300px, #1a2942 500px, #111b2a 700px, #151b28 840px, #0f1520 1080px, #0f2233 1250px, #0f1a30 1450px, #0a0e18);
`;
const Start = styled.button`
  width: 56px; flex: none; display: flex; align-items: center; justify-content: center; margin-right: 4px;
`;
const Apps = styled.div`
  display: flex; gap: 4px; flex: 1;
`;
const AppSlot = styled.button<{ $run?: boolean; $active?: boolean; $multi?: boolean }>`
  display: flex; align-items: center; justify-content: center; width: 58px; height: 38px; border-radius: 3px; flex: none;
  ${p => p.$run && css`
    border: 1px solid rgba(210, 220, 230, .75);
    background: linear-gradient(160deg, rgba(255, 255, 255, .45), rgba(255, 255, 255, .12) 55%, rgba(255, 255, 255, .2));
  `}
  ${p => p.$active && css`background: linear-gradient(#d0d3d8, #777c84 60%, #a9adb3); border-color: #eee;`}
  ${p => p.$multi && css`padding-right: 8px; box-shadow: inset -3px 0 #1a2942, inset -4px 0 #8c99aa, inset -7px 0 #1a2942, inset -8px 0 #8c99aa;`}
`;
const Notif = styled.div`
  display: flex; align-items: center; gap: 8px; font: 12px/16px ${UI};
  button { display: flex; }
`;
const Clock = styled.time`
  width: 78px; text-align: center; font: 11px/16px ${UI}; padding-bottom: 2px;
`;
const Desk = styled.button`
  width: 14px; height: 38px; border: 1px solid #7f8894; background: linear-gradient(#555d68, #161b24);
`;

const T = ({ children }: { children: React.ReactNode }) => (
  <svg width="32" height="32" viewBox="0 0 32 32" aria-hidden="true">{children}</svg>
);
const Office = ({ c, l, children }: { c: string; l: string; children: React.ReactNode }) => (
  <T>
    <path d="M9 2h17l-3 25-21-3C1 14 3 4 9 2z" fill="#fff" stroke={c} strokeWidth="2.500" />
    <path d="m13 5 17 3-2 23-17-4z" fill={l} stroke="#fff" strokeWidth="1" />
    {children}
  </T>
);
const APPS: { n: string; run?: boolean; active?: boolean; multi?: boolean; icon: React.ReactNode }[] = [
  { n: "Проводник", run: true, icon: <T><path d="M2 4h10l2 3h15v22H2z" fill="#e9c766" /><path d="M4 3h8v4H4z" fill="#3ba64b" /><path d="M14 4h8v4h-8z" fill="#fff" /><path d="M20 5h6v3h-6z" fill="#e0573b" /><path d="M1 9h30v21H1z" fill="#f8e2a0" /><path d="M6 31V20h20v11h-4v-6H10v6z" fill="#8fd0ef" stroke="#4aa3cf" /></T> },
  { n: "Файловый менеджер", icon: <T><rect x="1" y="1" width="30" height="26" fill="#0a1fd0" stroke="#18d6f0" strokeWidth="1.500" /><path d="M16 1v26M11 1v22M26 1v22M1 23h30" stroke="#18d6f0" /><path d="M3 4h5M18 4h5" stroke="#ff0" /><path d="M3 8h6M3 11h6M3 14h6M18 8h6M18 11h6M18 14h6" stroke="#9fe8ff" /><path d="M1 30h30" stroke="#3a6f78" strokeWidth="2" strokeDasharray="4 1" /></T> },
  { n: "Дискета", icon: <T><path d="M1 1h30v30H3l-2-2z" fill="#1f3fd0" stroke="#0d1e80" /><rect x="9" y="1" width="15" height="10" fill="#cfd6e6" /><rect x="17" y="2" width="4" height="7" fill="#16308f" /><rect x="5" y="14" width="22" height="16" fill="#fff" /><path d="M7 18h18M7 22h18M7 26h18" stroke="#d22" /></T> },
  { n: "Excel", icon: <Office c="#3f9a3d" l="#dcebd6"><path d="M19 9h9v5h-9zM19 16h9v5h-9zM19 23h8v5h-8zM12 23h5v4h-5z" fill="#6fb35f" /><path d="m7 9 9 11M17 9 6 20" stroke="#1f7a2a" strokeWidth="3.500" /></Office> },
  { n: "PowerPoint", icon: <Office c="#e2572b" l="#e2572b"><path d="M7 11h9v12H7z" fill="#fff" stroke="#e2572b" strokeWidth="2.500" /><path d="M9 15h5M9 19h5" stroke="#e2572b" strokeWidth="2" /><circle cx="22" cy="17" r="3.500" fill="#e2572b" stroke="#fff" strokeWidth="2.200" /><path d="M18 24h9" stroke="#fff" strokeWidth="1.500" /></Office> },
  { n: "Word", run: true, multi: true, icon: <Office c="#2e62b4" l="#e4edf8"><path d="m9 9 2 10 4-9 1 9 5-9" fill="none" stroke="#1f4f9c" strokeWidth="2.500" /><path d="M22 12h6M22 16h5M21 20h6M13 23h14M13 26h14" stroke="#2e62b4" strokeWidth="1.500" /></Office> },
  { n: "Камера", icon: <T><path d="M4 8 10 2h12l6 8 3 20H2z" fill="#1b1b1b" /><path d="M8 4h14l2 6H6z" fill="#444" /><circle cx="18" cy="13" r="7" fill="#cfd6e0" stroke="#555" strokeWidth="2" /><circle cx="18" cy="13" r="5" fill="#7b9ff0" /><circle cx="16" cy="11" r="2.500" fill="#fff" /><path d="M2 22h6l2 6H2zM24 22h6v6h-8z" fill="#555" /></T> },
  { n: "Internet Explorer", icon: <T><path d="M27 22c-4 7-18 6-18-4C9 6 27 6 27 18H10" fill="none" stroke="#3bb2ee" strokeWidth="5.500" /><path d="M3 29C-3 21 14 1 30 2c-9 0-24 12-24 23-1 2-2 4-3 4z" fill="#f7c72e" /></T> },
  { n: "Firefox", run: true, icon: <T><circle cx="17" cy="15" r="13" fill="#2d6fc0" /><circle cx="19" cy="10" r="5" fill="#79b9ee" /><path d="M3 4c2 3 5 2 7 3 5 0 5 3 1 5-1 6 6 9 12 5 3-3 4-7 3-12 6 5 6 14 2 20C21 34 8 33 3 25-1 19 0 10 3 4z" fill="#e8641b" /><path d="M27 5c5 6 5 14 1 20-3 3-8 5-12 5 9-4 13-12 11-25z" fill="#f9b62b" /></T> },
  { n: "VLC", icon: <T><path d="M5 22h22l2 9H3z" fill="#f28a12" /><path d="M14 2h4l7 24c-5 3-13 3-18 0z" fill="#f28a12" /><path d="m12.500 7-1.800 6c3 1.500 7.500 1.500 10.600 0l-1.800-6zM9 18.500 7.500 24c4 3 13 3 17 0L23 18.500c-4 2-10 2-14 0z" fill="#eee" /></T> },
  { n: "Skype", run: true, icon: <T><circle cx="9" cy="9" r="8" fill="#35bdf5" /><circle cx="23" cy="23" r="8" fill="#12a5e8" /><circle cx="16" cy="16" r="13" fill="#1fb2f0" /><path d="M21.500 11.500c-2-4-11-3-10.500 1 .5 4 11 2 10.500 7-.5 4.500-10 4-11.500 0" fill="none" stroke="#fff" strokeWidth="3.500" /></T> },
  { n: "AutoCAD", run: true, active: true, icon: <T><path d="M1 5h30v26H1z" fill="#f2f2f2" /><path d="M14 5h17v17L14 13z" fill="#444" /><path d="M9 2 15 0l9 20-6 1-2-5-6 1-2 5-5 3z" fill="#e3222a" /><path d="m13 7 2 5-4 1z" fill="#7d0a0a" /><path d="M25 29v-5h5v5M27.500 24v5" stroke="#000" strokeWidth="1.400" fill="none" /></T> },
];

const Main = () => (
  <>
    <FrameStrip $h={6} />
    <Workarea>
      <Canvas>
        <Drawing />
        <ViewLabel><span>[−]</span><span>[Верхняя]</span><span>[2D каркас]</span></ViewLabel>
        <ViewControls><WinIcons /></ViewControls>
      </Canvas>
      <VScroll>
        <ScrollBtn aria-label="Вверх"><Ico s={7}><path d="m3.500 2 3.500 3.500H0z" fill="#333" stroke="none" /></Ico></ScrollBtn>
        <Thumb /><Fill />
        <ScrollBtn aria-label="Вниз"><Arrow size={7} /></ScrollBtn>
      </VScroll>
    </Workarea>
    <LayoutBar>
      <LayoutTabs>
        {["M2 1v8M9 1v8L4 5z", "M8 1v8L3 5z", "M2 1v8l5-4z", "M1 1v8l5-4zM8 1v8"].map((d, i) => (
          <NavBtn key={d} aria-label={["Первый", "Предыдущий", "Следующий", "Последний"][i]}><Ico s={10} w={1}><path d={d} fill="#555" stroke="#555" /></Ico></NavBtn>
        ))}
        <SheetTab $on $w={63}><Edge back />Модель<Edge /></SheetTab>
        <SheetTab $w={47}><i />Лист1<Edge /></SheetTab>
        <SheetTab $w={48}><i />Лист2<Edge /></SheetTab>
      </LayoutTabs>
      <HScroll>
        <Grip />
        <ScrollBtn aria-label="Влево"><Ico s={7}><path d="M5 0v7L1.500 3.500z" fill="#222" stroke="none" /></Ico></ScrollBtn>
        <HTrack><i /><Thumb /><i /></HTrack>
        <ScrollBtn aria-label="Вправо"><Ico s={7}><path d="M2 0v7l3.500-3.500z" fill="#222" stroke="none" /></Ico></ScrollBtn>
      </HScroll>
    </LayoutBar>
    <FrameStrip $h={5} />
    <Command>
      <CommandGrip />
      <CommandMain>
        <History><p>Команда:</p><p>Команда:</p></History>
        <Prompt>Команда:<input /></Prompt>
      </CommandMain>
    </Command>
    <Status>
      <Coords>3632.02, 1069.45, 0.00</Coords>
      {S.map((icon, i) => <StBtn key={i} $on={[5, 7, 9, 10, 11].includes(i)} aria-label={`Режим ${i + 1}`}>{icon}</StBtn>)}
      <StBtn $w={50}>STRUCT</StBtn>
      <Fill />
      <StBtn $w={55}>МОДЕЛЬ</StBtn>
      <StBtn aria-label="Модель"><Ico><rect x="2" y="1" width="12" height="10" fill="#eee" /><path d="M5 3v6h5z" fill="#fff" /><path d="M1 14h14" strokeWidth="2" /></Ico></StBtn>
      <StBtn aria-label="Листы"><Ico><path d="M1 1h6v7H1zM9 1h6v7H9z" fill="#eee" /><path d="M0 11h16M0 14h16" strokeWidth="1.500" /></Ico></StBtn>
      <Gap $w={12} />
      <StBtn $w={51}><Ico><path d="M8 1 6.500 7 1 14l2 1 5-5 5 5 2-1-5.500-7z" fill="#eee" /></Ico>1:1<Arrow size={7} color="#000" /></StBtn>
      <Gap $w={6} />
      <StBtn aria-label="Рабочее пространство"><Gear /></StBtn>
      <StBtn aria-label="Блокировка"><Ico><rect x="1" y="8" width="9" height="7" fill="#fff" /><path d="M8 8V4.500a3 3 0 0 1 6 0V7" strokeWidth="1.800" /><path d="M5.500 10v3" /></Ico></StBtn>
      <StBtn aria-label="Аппаратное ускорение"><Ico><rect x="1" y="3" width="13" height="7" fill="#7d8896" /><path d="M3 1v2M6 1v2M9 1v2M12 1v2M3 10v2M6 10v2" /><circle cx="12" cy="11" r="2.500" fill="#ffd56a" stroke="#d9760a" /></Ico></StBtn>
      <Tray>
        <Ico><rect width="16" height="16" fill="#0d62c8" stroke="none" /><path d="M11 0h5v16h-5z" fill="#ffe000" stroke="none" /><path d="M2 8l5-5v3h6v4H7v3z" fill="#ffe000" stroke="#222" strokeWidth=".8" /></Ico>
        <Ico><path d="M1 5h6l1 2h6v7H1z" fill="#f7cf52" stroke="#9a7410" /><path d="M4 1h8v6H4z" fill="#3b8fd8" /><path d="m7 11 3 4 6-7" stroke="#3aa62a" strokeWidth="2.400" /></Ico>
        <Bulb />
      </Tray>
      <StBtn $w={12} aria-label="Меню строки состояния"><Arrow color="#000" /></StBtn>
    </Status>
  </>
);

export default function App() {
  return (
    <Page>
      <Global />
      <Header />
      <RibbonBar />
      <Main />
      <Taskbar>
        <Start aria-label="Пуск">
          <svg width="38" height="38" viewBox="0 0 38 38" aria-hidden="true">
            <defs><radialGradient id="orb" cx=".5" cy=".9"><stop offset="0" stopColor="#5fd0f5" /><stop offset=".6" stopColor="#1f5f98" /><stop offset="1" stopColor="#6a8aa5" /></radialGradient></defs>
            <circle cx="19" cy="19" r="18" fill="url(#orb)" stroke="#a5bccf" />
            <path d="M10 11c3-2 6-1 8 0l-1 8c-3-2-6-1-9 0z" fill="#f0622b" />
            <path d="M20 12c3 1 6 1 9 0l-2 8c-3 1-6 1-8 0z" fill="#8cc63e" />
            <path d="M8 21c3-1 6-2 9 0l-2 7c-2-1-5-1-8 0z" fill="#3fa5e8" />
            <path d="M18 21c3 2 6 1 9 0l-2 8c-3 1-6 1-8 0z" fill="#fdc82f" />
          </svg>
        </Start>
        <Apps>
          {APPS.map(a => <AppSlot key={a.n} aria-label={a.n} $run={a.run} $active={a.active} $multi={a.multi}>{a.icon}</AppSlot>)}
        </Apps>
        <Notif>
          <span>RU</span>
          <button aria-label="Языковая панель"><svg width="10" height="18" viewBox="0 0 10 18" fill="none" stroke="#fff" aria-hidden="true"><path d="M3.500.5h5v4h-5zM.5 2.500h5v4h-5z" fill="#0d1420" /><path d="M2 13h6l-3 3z" fill="#fff" stroke="none" /></svg></button>
          <button aria-label="Скрытые значки"><Ico s={7}><path d="m3.500 2 3.500 4H0z" fill="#fff" stroke="none" /></Ico></button>
          <button aria-label="Центр поддержки"><Ico><path d="M2 1v14" stroke="#fff" /><path d="M3 2c3-1 4 1 6 1s3-1 6 0l-2 4c-3 0-4 0-5-1s-3 0-5 0z" fill="#fff" stroke="none" /></Ico></button>
          <button aria-label="Сеть"><Ico><path d="M5 4h10v8H5zM7 15h7M10 12v3M1 1v4h3V1M2.500 5v8H5" stroke="#fff" /></Ico></button>
          <button aria-label="Громкость"><Ico><path d="M1 6h3l4-4v12l-4-4H1z" fill="#fff" stroke="none" /><path d="M10 6c1 1 1 3 0 4M12 4c2 2 2 6 0 8M14 2.500c3 3 3 8 0 11" stroke="#fff" /></Ico></button>
          <Clock>18:03<br />02.09.2012</Clock>
        </Notif>
        <Desk aria-label="Показать рабочий стол" />
      </Taskbar>
    </Page>
  );
}
